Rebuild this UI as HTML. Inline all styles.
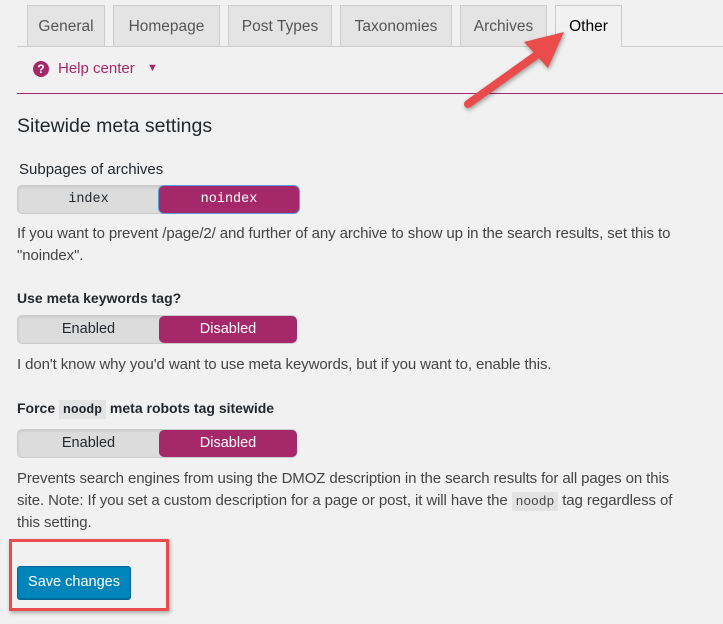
<!DOCTYPE html>
<html><head><meta charset="utf-8"><style>
*{margin:0;padding:0;box-sizing:border-box}
body{width:723px;height:624px;background:#f1f1f1;font-family:"Liberation Sans",sans-serif;color:#23282d;position:relative;overflow:hidden}
.a{position:absolute;white-space:nowrap}
.tab{position:absolute;top:5px;height:41px;background:#e4e4e4;border:1px solid #ccc;border-bottom:none;font-size:15.5px;color:#555;text-align:center;line-height:42px}
.tab.on{background:#f1f1f1;color:#000;height:42px}
.tg{position:absolute;height:29px;border-radius:5px;background:#dcdcdc;border:1px solid #ccc;box-shadow:inset 0 1px 2px rgba(0,0,0,.1)}
.tg span{position:absolute;top:0;height:27px;line-height:27px;text-align:center;font-size:14.5px}
.tg .s{background:#a4286a;color:#fff;border-radius:5px}
.d{font-size:15px;color:#444;line-height:22px;letter-spacing:-0.1px}
.l{font-size:15px;color:#23282d}
</style></head><body>
<div class="a" style="left:17px;top:46px;width:706px;border-top:1px solid #ccc"></div>
<div class="tab" style="left:27px;width:78px">General</div>
<div class="tab" style="left:113px;width:107px">Homepage</div>
<div class="tab" style="left:228px;width:104px">Post Types</div>
<div class="tab" style="left:340px;width:112px">Taxonomies</div>
<div class="tab" style="left:460px;width:87px">Archives</div>
<div class="tab on" style="left:555px;width:67px">Other</div>
<div class="a" style="left:33px;top:61px;width:16px;height:16px;border-radius:50%;background:#a4286a;color:#fff;font-size:12px;font-weight:bold;text-align:center;line-height:16px">?</div>
<div class="a" style="left:58px;top:60px;font-size:15px;color:#a4286a">Help center</div>
<div class="a" style="left:147px;top:62px;font-size:11px;color:#a4286a">▼</div>
<div class="a" style="left:17px;top:93px;width:706px;border-top:1px solid #a4286a"></div>
<div class="a" style="left:17px;top:115px;font-size:19.5px;color:#23282d">Sitewide meta settings</div>
<div class="a l" style="left:19px;top:161px">Subpages of archives</div>
<div class="tg" style="left:17px;top:185px;width:282px"><span style="left:0;width:141px;font-family:'Liberation Mono',monospace;font-size:13.5px">index</span><span class="s" style="left:141px;width:140px;font-family:'Liberation Mono',monospace;font-size:13.5px;box-shadow:0 0 0 1px #5b9dd9">noindex</span></div>
<div class="a d" style="left:17px;top:223px">If you want to prevent /page/2/ and further of any archive to show up in the search results, set this to</div>
<div class="a d" style="left:17px;top:245px">"noindex".</div>
<div class="a l" style="left:17px;top:290px;font-weight:bold;font-size:14px">Use meta keywords tag?</div>
<div class="tg" style="left:17px;top:315px;width:280px"><span style="left:0;width:141px">Enabled</span><span class="s" style="left:141px;width:138px">Disabled</span></div>
<div class="a d" style="left:17px;top:354px">I don't know why you'd want to use meta keywords, but if you want to, enable this.</div>
<div class="a l" style="left:17px;top:400px;font-weight:bold;font-size:14px">Force <span style="background:#e3e3e3;font-family:'Liberation Mono',monospace;font-size:13px;padding:2px 4px">noodp</span> meta robots tag sitewide</div>
<div class="tg" style="left:17px;top:429px;width:280px"><span style="left:0;width:141px">Enabled</span><span class="s" style="left:141px;width:138px">Disabled</span></div>
<div class="a d" style="left:17px;top:468px">Prevents search engines from using the DMOZ description in the search results for all pages on this</div>
<div class="a d" style="left:17px;top:490px">site. Note: If you set a custom description for a page or post, it will have the <span style="background:#e3e3e3;font-family:'Liberation Mono',monospace;font-size:13px;padding:2px 4px">noodp</span> tag regardless of</div>
<div class="a d" style="left:17px;top:512px">this setting.</div>
<div class="a" style="left:17px;top:566px;width:114px;height:33px;background:#0085ba;border:1px solid #006799;border-radius:3px;color:#fff;font-size:14.5px;text-align:center;line-height:31px;box-shadow:0 1px 0 #006799">Save changes</div>
<div class="a" style="left:9px;top:539px;width:160px;height:72px;border:3px solid #e84c4c;box-shadow:1px 2px 4px rgba(0,0,0,.3)"></div>
<svg class="a" style="left:0;top:0" width="723" height="624"><g filter="drop-shadow(1px 2px 2px rgba(0,0,0,.35))"><line x1="468" y1="104" x2="538" y2="54" stroke="#ea4b4b" stroke-width="8" stroke-linecap="round"/><polygon points="564,32 524,42 548,68" fill="#ea4b4b"/></g></svg>
</body></html>
